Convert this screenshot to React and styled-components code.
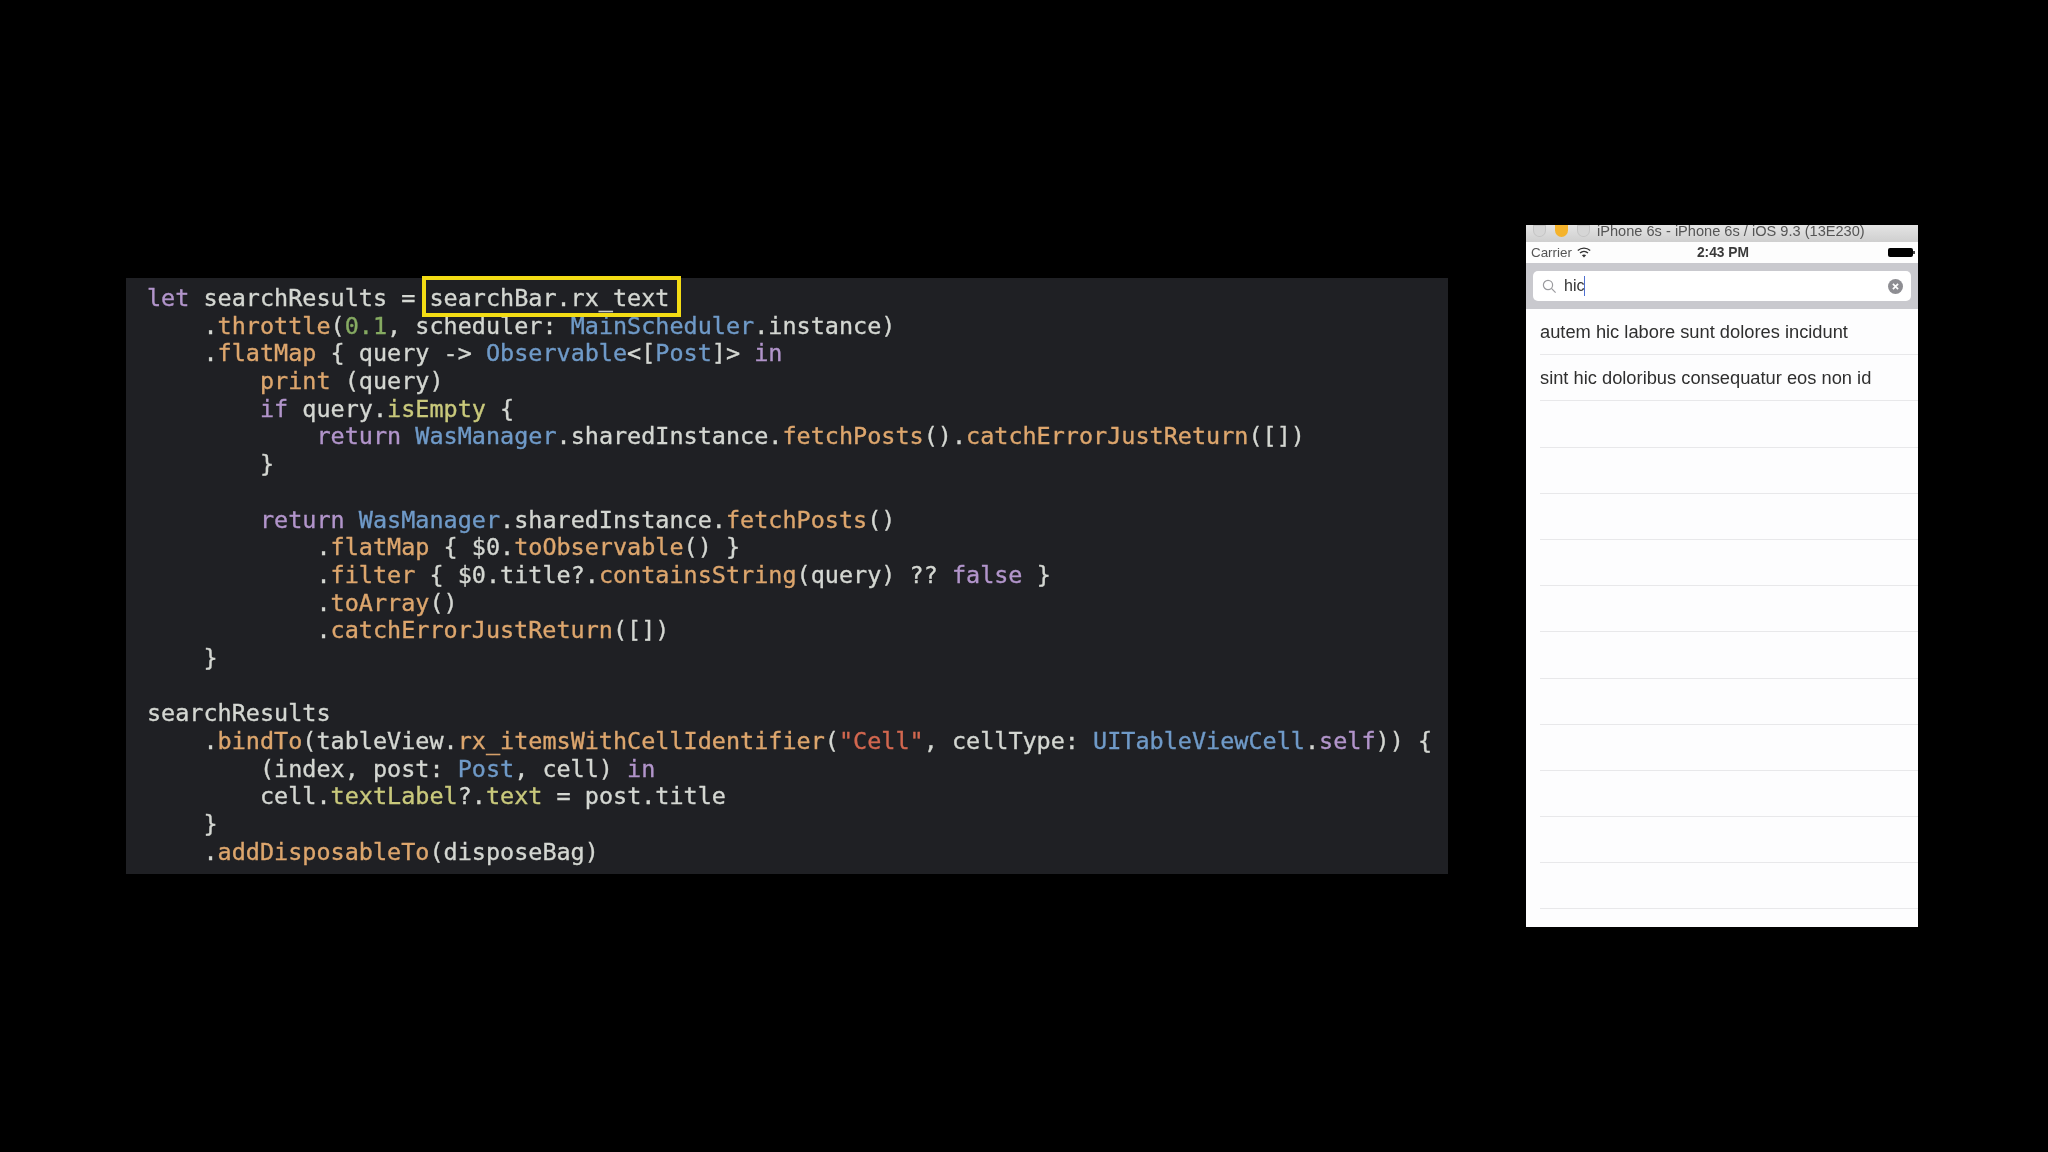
import React from "react";
import styled, { createGlobalStyle } from "styled-components";

const Global = createGlobalStyle`
  html, body { margin: 0; padding: 0; background: #000; }
`;

const Stage = styled.div`
  width: 2048px;
  height: 1152px;
  background: #000;
  display: flex;
  align-items: flex-start;
  padding-left: 126px;
  box-sizing: border-box;
`;

const CodePanel = styled.pre`
  width: 1322px;
  height: 596px;
  margin: 278px 0 0 0;
  padding: 7px 0 0 21px;
  box-sizing: border-box;
  background: #1f2024;
  color: #d4d7d2;
  font-family: "DejaVu Sans Mono", monospace;
  font-size: 23.46px;
  line-height: 27.69px;
  -webkit-text-stroke: 0.35px currentColor;
  filter: blur(0.6px);
`;

const COLORS = {
  kw: "#b295cb",
  type: "#6f9ac8",
  fn: "#dda66d",
  num: "#86ab62",
  str: "#d2674f",
  prop: "#c9c97c",
};

const Tok = styled.span`
  color: ${(p) => COLORS[p.$kind]};
`;

const Highlight = styled.span`
  position: relative;

  &::after {
    content: "";
    position: absolute;
    left: -7px;
    right: -12px;
    top: -8px;
    bottom: -5px;
    border: 4px solid #f3dc14;
  }
`;

const Phone = styled.div`
  width: 392px;
  height: 702px;
  margin: 225px 0 0 78px;
  background: #fdfdfe;
  display: flex;
  flex-direction: column;
  font-family: "Liberation Sans", Arial, sans-serif;
  filter: blur(0.5px);
`;

const TitleBar = styled.div`
  height: 17px;
  flex: none;
  box-sizing: border-box;
  padding: 0 0 5px 7px;
  background: linear-gradient(#e4e4e4, #cfcfcf);
  display: flex;
  align-items: center;
  color: #555;
  font-size: 14.6px;
  line-height: 12px;
`;

const Light = styled.span`
  width: 13px;
  height: 12px;
  margin-right: 9px;
  border-radius: 0 0 7px 7px;
  flex: none;
  background: ${(p) => (p.$on ? "#f5b32c" : "#d6d6d6")};
  box-shadow: ${(p) => (p.$on ? "none" : "inset 0 0 0 1px #c4c4c4")};
`;

const Title = styled.span`
  margin-left: -2px;
  white-space: nowrap;
`;

const StatusBar = styled.div`
  height: 21px;
  flex: none;
  background: #fdfdfd;
  display: grid;
  grid-template-columns: 1fr auto 1fr;
  align-items: center;
  padding: 0 5px;
  font-size: 13.4px;
  color: #333;
`;

const Carrier = styled.div`
  display: flex;
  align-items: center;
  gap: 5px;
  color: #555;
`;

const Time = styled.div`
  margin-left: 2px;
  font-size: 13.8px;
  font-weight: 700;
  color: #3a3a3a;
`;

const Battery = styled.div`
  justify-self: end;
  width: 25px;
  height: 9px;
  border-radius: 2px;
  background: #000;
  position: relative;

  &::after {
    content: "";
    position: absolute;
    right: -2px;
    top: 3px;
    width: 2px;
    height: 3px;
    background: #444;
  }
`;

const SearchBar = styled.div`
  height: 46px;
  flex: none;
  background: #c9c9ce;
  padding: 8px 7px;
  box-sizing: border-box;
`;

const Field = styled.div`
  height: 30px;
  background: #fff;
  border-radius: 5px;
  display: flex;
  align-items: center;
  padding: 0 8px 0 9px;
  font-size: 16px;
  color: #333;
`;

const Query = styled.span`
  margin-left: 7px;
  border-right: 1.5px solid #4d6fd0;
  line-height: 20px;
`;

const Clear = styled.svg`
  margin-left: auto;
`;

const Row = styled.div`
  height: 46.2px;
  flex: none;
  box-sizing: border-box;
  margin-left: 14px;
  border-bottom: 1.4px solid #e8e8ea;
  display: flex;
  align-items: center;
  font-size: 18.3px;
  color: #2f2f2f;
  white-space: nowrap;
`;

const kw = (t) => <Tok $kind="kw">{t}</Tok>;
const ty = (t) => <Tok $kind="type">{t}</Tok>;
const fn = (t) => <Tok $kind="fn">{t}</Tok>;
const pr = (t) => <Tok $kind="prop">{t}</Tok>;

const CODE = (
  <>
    {kw("let")} searchResults = <Highlight>searchBar.rx_text</Highlight>{"\n"}
    {"    ."}{fn("throttle")}(<Tok $kind="num">0.1</Tok>, scheduler: {ty("MainScheduler")}.instance){"\n"}
    {"    ."}{fn("flatMap")} {"{"} query -&gt; {ty("Observable")}&lt;[{ty("Post")}]&gt; {kw("in")}{"\n"}
    {"        "}{fn("print")} (query){"\n"}
    {"        "}{kw("if")} query.{pr("isEmpty")} {"{"}{"\n"}
    {"            "}{kw("return")} {ty("WasManager")}.sharedInstance.{fn("fetchPosts")}().{fn("catchErrorJustReturn")}([]){"\n"}
    {"        }"}{"\n"}
    {"\n"}
    {"        "}{kw("return")} {ty("WasManager")}.sharedInstance.{fn("fetchPosts")}(){"\n"}
    {"            ."}{fn("flatMap")} {"{"} $0.{fn("toObservable")}() {"}"}{"\n"}
    {"            ."}{fn("filter")} {"{"} $0.title?.{fn("containsString")}(query) ?? {kw("false")} {"}"}{"\n"}
    {"            ."}{fn("toArray")}(){"\n"}
    {"            ."}{fn("catchErrorJustReturn")}([]){"\n"}
    {"    }"}{"\n"}
    {"\n"}
    searchResults{"\n"}
    {"    ."}{fn("bindTo")}(tableView.{fn("rx_itemsWithCellIdentifier")}(<Tok $kind="str">"Cell"</Tok>, cellType: {ty("UITableViewCell")}.{kw("self")})) {"{"}{"\n"}
    {"        "}(index, post: {ty("Post")}, cell) {kw("in")}{"\n"}
    {"        "}cell.{pr("textLabel")}?.{pr("text")} = post.title{"\n"}
    {"    }"}{"\n"}
    {"    ."}{fn("addDisposableTo")}(disposeBag)
  </>
);

const ROWS = [
  "autem hic labore sunt dolores incidunt",
  "sint hic doloribus consequatur eos non id",
  "", "", "", "", "", "", "", "", "", "", "",
];

const WifiIcon = () => (
  <svg width="14" height="11" viewBox="0 0 14 11" fill="none" stroke="#333" strokeWidth="1.3">
    <path d="M0.8 3.6 C4.3 0.4 9.7 0.4 13.2 3.6" />
    <path d="M3 6 C5.3 4 8.7 4 11 6" />
    <path d="M7 10.6 L4.9 8.2 C6.1 7.2 7.9 7.2 9.1 8.2 Z" fill="#333" stroke="none" />
  </svg>
);

const SearchIcon = () => (
  <svg width="15" height="15" viewBox="0 0 15 15" fill="none" stroke="#9a9a9e" strokeWidth="1.2">
    <circle cx="6" cy="6" r="4.6" />
    <path d="M9.4 9.4 L13.6 13.6" />
  </svg>
);

const ClearIcon = () => (
  <Clear width="15" height="15" viewBox="0 0 15 15">
    <circle cx="7.5" cy="7.5" r="7.5" fill="#8e8e93" />
    <path d="M4.9 4.9 L10.1 10.1 M10.1 4.9 L4.9 10.1" stroke="#fff" strokeWidth="1.7" />
  </Clear>
);

export default function App() {
  return (
    <>
      <Global />
      <Stage>
        <CodePanel>{CODE}</CodePanel>
        <Phone>
          <TitleBar>
            <Light />
            <Light $on />
            <Light />
            <Title>iPhone 6s - iPhone 6s / iOS 9.3 (13E230)</Title>
          </TitleBar>
          <StatusBar>
            <Carrier>
              Carrier <WifiIcon />
            </Carrier>
            <Time>2:43 PM</Time>
            <Battery />
          </StatusBar>
          <SearchBar>
            <Field>
              <SearchIcon />
              <Query>hic</Query>
              <ClearIcon />
            </Field>
          </SearchBar>
          {ROWS.map((text, i) => (
            <Row key={i}>{text}</Row>
          ))}
        </Phone>
      </Stage>
    </>
  );
}
